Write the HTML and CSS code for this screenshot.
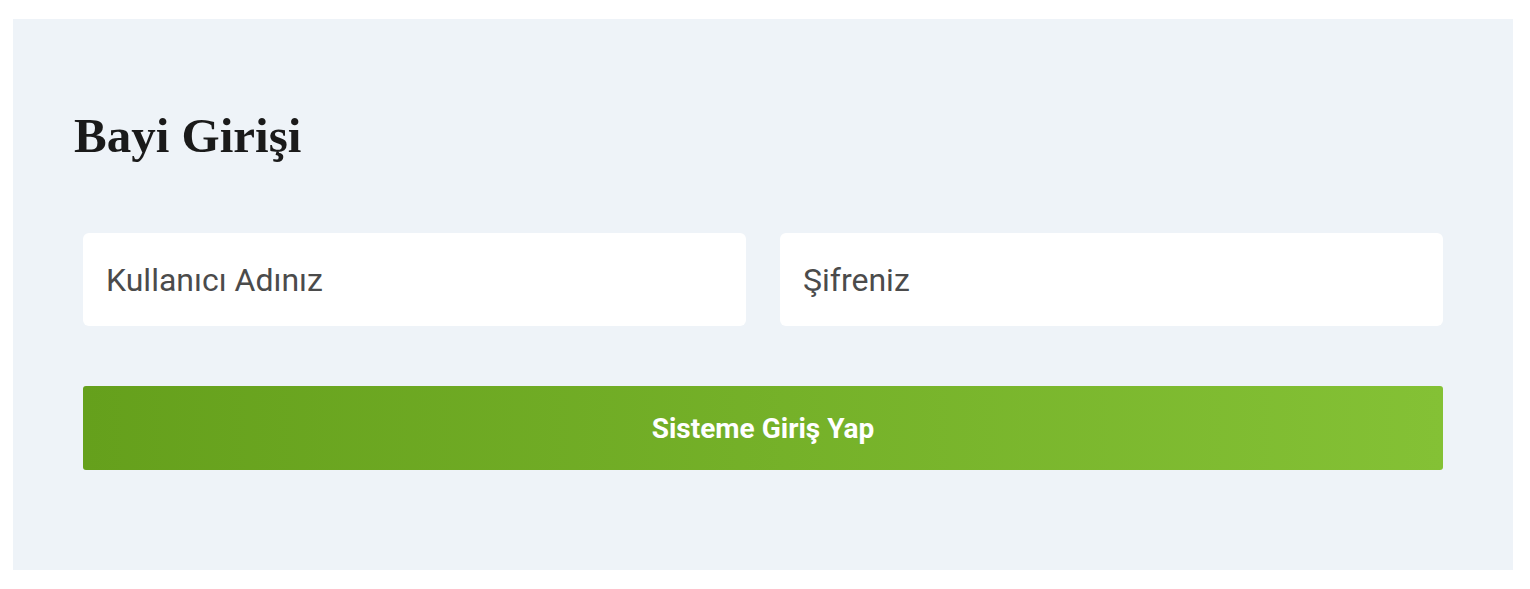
FILE: index.html
```html
<!DOCTYPE html>
<html lang="tr">

<head>
    <meta charset="UTF-8">
    <title>Bayi Girişi</title>
    <link rel="stylesheet" href="styles.css">
</head>

<body>

    <div class="login_box">
        <h2 class="login_title">Bayi Girişi</h2>

        <form class="login_form" onsubmit="return false;">
            <div class="field_row">
                <input type="text" class="field" placeholder="Kullanıcı Adınız">
                <input type="password" class="field" placeholder="Şifreniz">
            </div>
            <button type="submit" class="login_btn">Sisteme Giriş Yap</button>
        </form>
    </div>

</body>

</html>
```

FILE: styles.css
```css
body {
    margin: 0;
    background-color: white;
}

.login_box {
    margin: 19px 17px 0 13px;
    padding: 92px 70px 100px 70px;
    background-color: #eef3f8;
}

.login_title {
    margin: 0 0 73px -9px;
    font-family: "Liberation Serif", "Times New Roman", serif;
    font-size: 49px;
    line-height: 1;
    font-weight: bold;
    color: #1a1a1a;
}

.field_row {
    display: flex;
    gap: 34px;
    margin-bottom: 60px;
}

.field {
    flex: 1;
    min-width: 0;
    height: 93px;
    box-sizing: border-box;
    padding: 0 23px;
    border: none;
    border-radius: 6px;
    background-color: white;
    font-family: Roboto, "Liberation Sans", sans-serif;
    font-size: 32px;
    color: #4b4b4b;
    outline: none;
}

.field::placeholder {
    color: #4b4b4b;
    opacity: 1;
}

.login_btn {
    display: block;
    width: 100%;
    height: 84px;
    border: none;
    border-radius: 3px;
    background: linear-gradient(to right, #65a01c, #84c135);
    color: white;
    font-family: Roboto, "Liberation Sans", sans-serif;
    font-size: 28px;
    font-weight: bold;
    cursor: pointer;
}
```
